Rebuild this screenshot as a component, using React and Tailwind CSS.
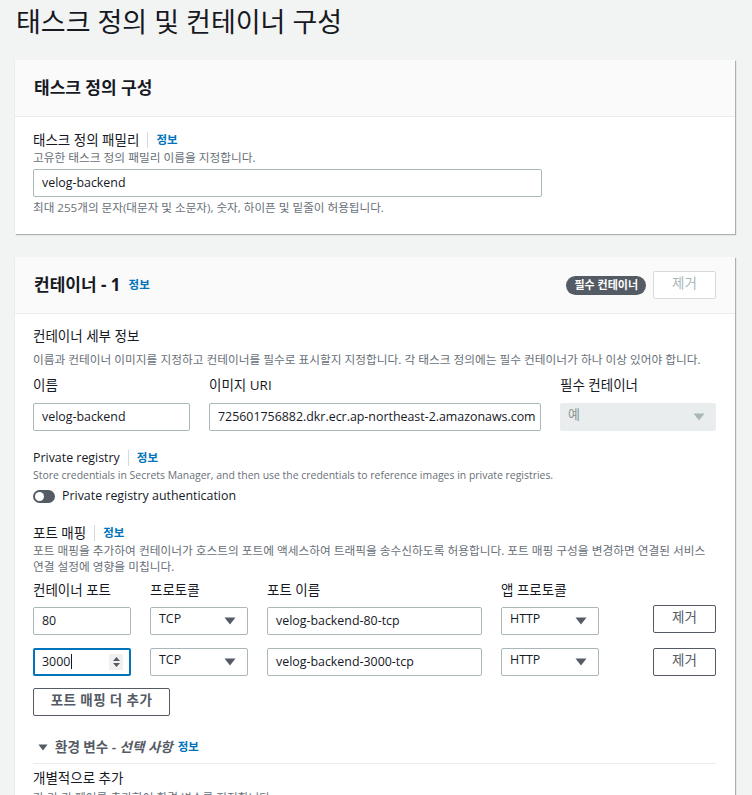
import { useState } from 'react'

const font = { fontFamily: '"Open Sans", "Noto Sans CJK KR", sans-serif' }

function Info({ divider = true, className = '' }) {
  return (
    <span className={`inline-flex items-center ${className}`}>
      {divider && <span className="mx-[8px] h-[16px] w-px bg-[#d5dbdb]" />}
      <span className="text-[11.5px] font-bold text-[#0073bb]">정보</span>
    </span>
  )
}

function Caret({ color = '#545b64', w = 12, h = 8 }) {
  return (
    <svg width={w} height={h} viewBox="0 0 12 8">
      <path d="M0.5 0.5h11L6 7.5z" fill={color} />
    </svg>
  )
}

function TextInput({ value, className = '' }) {
  return (
    <div className={`flex h-[28px] items-center overflow-hidden whitespace-nowrap rounded-[2px] border border-[#aab7b8] bg-white px-[8px] text-[12.4px] text-[#16191f] ${className}`}>
      {value}
    </div>
  )
}

function Select({ value, className = '' }) {
  return (
    <div className={`flex h-[28px] items-center justify-between rounded-[2px] border border-[#aab7b8] bg-white pl-[8px] pr-[11px] text-[12.4px] text-[#16191f] ${className}`}>
      <span className="-mt-[3px]">{value}</span>
      <Caret />
    </div>
  )
}

function Button({ children, className = '', disabled = false }) {
  return (
    <div
      className={`flex h-[28px] items-center justify-center rounded-[2px] border bg-white text-[13.5px] ${
        disabled ? 'border-[#d5dbdb] text-[#aab7b8]' : 'border-[#545b64] text-[#545b64]'
      } ${className}`}
    >
      <span className="-mt-[3px]">{children}</span>
    </div>
  )
}

function PortRow({ port, name, focused, btnClass = '' }) {
  return (
    <div className="flex items-start">
      {focused ? (
        <div className="flex h-[28px] w-[98px] items-center justify-between rounded-[2px] border-2 border-[#0073bb] bg-white pl-[7px] pr-[6px] text-[12.4px] text-[#16191f]">
          <span className="flex items-center">
            {port}
            <span className="ml-px h-[15px] w-px bg-[#16191f]" />
          </span>
          <span className="flex h-[16px] w-[14px] flex-col items-center justify-center gap-[2px] bg-[#f0f0f0]">
            <svg width="7" height="4" viewBox="0 0 7 4"><path d="M3.5 0L7 4H0z" fill="#545b64" /></svg>
            <svg width="7" height="4" viewBox="0 0 7 4"><path d="M0 0h7L3.5 4z" fill="#545b64" /></svg>
          </span>
        </div>
      ) : (
        <TextInput value={port} className="w-[98px]" />
      )}
      <Select value="TCP" className="ml-[19px] w-[98px]" />
      <TextInput value={name} className="ml-[19px] w-[215px]" />
      <Select value="HTTP" className="ml-[19px] w-[98px]" />
      <Button className={`ml-[54px] w-[63px] ${btnClass}`}>제거</Button>
    </div>
  )
}

export default function App() {
  const [on] = useState(false)
  return (
    <div className="h-[795px] overflow-hidden bg-[#f2f3f3] text-[#16191f]" style={font}>
      <h1 className="pl-[16px] pt-[4px] text-[27px] font-normal leading-[36px]">태스크 정의 및 컨테이너 구성</h1>

      <div className="ml-[15px] mt-[20px] w-[720px] bg-white shadow-[1px_1px_1px_rgba(0,28,36,0.3),-1px_0_0_#eaeded]">
        <div className="flex h-[57px] items-center border-b border-[#eaeded] bg-[#fafafa] pl-[19px]">
          <span className="text-[17px] font-bold">태스크 정의 구성</span>
        </div>
        <div className="pb-[18px] pl-[18px] pt-[14px]">
          <div className="flex h-[18px] items-center text-[13.5px]">
            태스크 정의 패밀리
            <Info />
          </div>
          <div className="text-[11.7px] leading-[16px] text-[#687078]">고유한 태스크 정의 패밀리 이름을 지정합니다.</div>
          <TextInput value="velog-backend" className="mt-[4px] w-[509px]" />
          <div className="mt-[3px] text-[11.6px] leading-[16px] text-[#687078]">
            최대 255개의 문자(대문자 및 소문자), 숫자, 하이픈 및 밑줄이 허용됩니다.
          </div>
        </div>
      </div>

      <div className="ml-[15px] mt-[23px] w-[720px] bg-white shadow-[1px_1px_1px_rgba(0,28,36,0.3),-1px_0_0_#eaeded]">
        <div className="flex h-[57px] items-center border-b border-[#eaeded] bg-[#fafafa] pl-[19px] pr-[19px]">
          <span className="text-[17px] font-bold">컨테이너 - 1</span>
          <Info divider={false} className="ml-[8px]" />
          <span className="ml-auto flex h-[19px] items-center rounded-full bg-[#545b64] px-[8px] text-[11px] font-bold text-white">
            필수 컨테이너
          </span>
          <Button disabled className="ml-[7px] w-[63px]">제거</Button>
        </div>

        <div className="pl-[18px] pr-[19px] pt-[13px]">
          <div className="text-[13.5px] leading-[18px]">컨테이너 세부 정보</div>
          <div className="mt-[6px] text-[11.7px] leading-[16px] text-[#687078]">
            이름과 컨테이너 이미지를 지정하고 컨테이너를 필수로 표시할지 지정합니다. 각 태스크 정의에는 필수 컨테이너가 하나 이상 있어야 합니다.
          </div>

          <div className="grid grid-cols-[157px_332px_156px] gap-x-[19px]">
            <div className="flex h-[36px] items-center text-[13.5px]">이름</div>
            <div className="flex h-[36px] items-center text-[13.5px]">이미지 URI</div>
            <div className="flex h-[36px] items-center text-[13.5px]">필수 컨테이너</div>
            <TextInput value="velog-backend" />
            <TextInput value="725601756882.dkr.ecr.ap-northeast-2.amazonaws.com" />
            <div className="flex h-[28px] items-center justify-between rounded-[2px] bg-[#eaeded] pl-[8px] pr-[11px] text-[13px] text-[#879596]">
              <span className="-mt-[5px]">예</span>
              <Caret color="#aab7b8" />
            </div>
          </div>

          <div className="mt-[18px] flex h-[18px] items-center text-[12.4px]">
            Private registry
            <Info />
          </div>
          <div className="text-[10.45px] leading-[16px] text-[#687078]">
            Store credentials in Secrets Manager, and then use the credentials to reference images in private registries.
          </div>
          <div className="mt-[4px] flex h-[18px] items-center text-[12.4px]">
            <span className={`flex h-[13px] w-[22px] items-center rounded-full bg-[#545b64] px-[2px] ${on ? 'justify-end' : ''}`}>
              <span className="h-[9px] w-[9px] rounded-full bg-white" />
            </span>
            <span className="ml-[7px]">Private registry authentication</span>
          </div>

          <div className="mt-[19px] flex h-[18px] items-center text-[13.5px]">
            포트 매핑
            <Info />
          </div>
          <div className="text-[11.7px] leading-[16px] text-[#687078]">
            포트 매핑을 추가하여 컨테이너가 호스트의 포트에 액세스하여 트래픽을 송수신하도록 허용합니다. 포트 매핑 구성을 변경하면 연결된 서비스 연결 설정에 영향을 미칩니다.
          </div>

          <div className="flex h-[33px] items-center text-[13.5px]">
            <span className="w-[117px]">컨테이너 포트</span>
            <span className="w-[117px]">프로토콜</span>
            <span className="w-[234px]">포트 이름</span>
            <span>앱 프로토콜</span>
          </div>
          <div className="flex flex-col gap-[13px]">
            <PortRow port="80" name="velog-backend-80-tcp" btnClass="-mt-[2px]" />
            <PortRow port="3000" name="velog-backend-3000-tcp" focused />
          </div>
          <Button className="mt-[12px] w-[137px] font-bold tracking-[0.4px]">포트 매핑 더 추가</Button>

          <div className="mt-[22px] flex h-[18px] items-center pl-[5px] text-[13.5px]">
            <Caret w={10} h={7} />
            <span className="ml-[7px] font-semibold text-[#545b64]">환경 변수 - <i>선택 사항</i></span>
            <Info divider={false} className="ml-[5px]" />
          </div>
          <div className="mt-[7px] border-t border-[#eaeded]" />
          <div className="mt-[5px] text-[13.5px] leading-[18px]">개별적으로 추가</div>
          <div className="mt-[2px] text-[11.7px] leading-[16px] text-[#687078]">각 키-값 페어를 추가하여 환경 변수를 지정합니다.</div>
          <div className="h-[40px]" />
        </div>
      </div>
    </div>
  )
}
